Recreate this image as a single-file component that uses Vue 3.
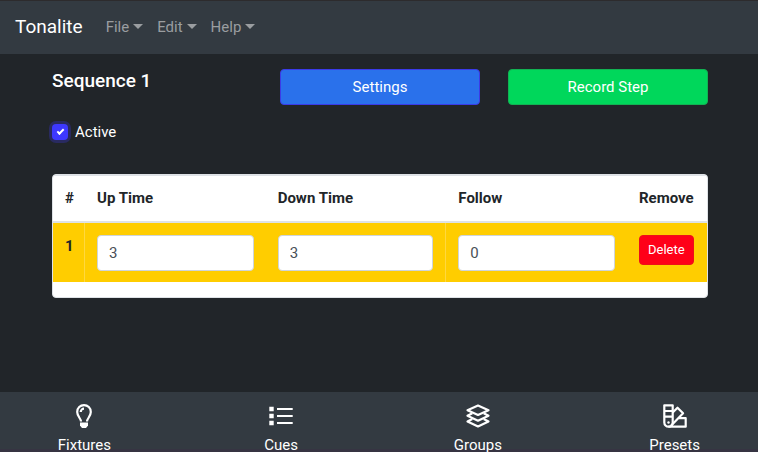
<script setup>
import { ref } from 'vue'

const menus = ['File', 'Edit', 'Help']
const active = ref(true)
const steps = ref([{ id: 1, up: 3, down: 3, follow: 0 }])
const tabs = ['Fixtures', 'Cues', 'Groups', 'Presets']
</script>

<template>
  <div class="app">
    <nav class="navbar">
      <a class="brand" href="#">Tonalite</a>
      <a v-for="menu in menus" :key="menu" class="menu" href="#">
        {{ menu }}<span class="caret"></span>
      </a>
    </nav>

    <main class="content">
      <div class="head">
        <h1>Sequence 1</h1>
        <button class="btn settings" type="button">Settings</button>
        <button class="btn record" type="button">Record Step</button>
      </div>

      <div class="check">
        <input id="active" v-model="active" type="checkbox" />
        <label for="active">Active</label>
      </div>

      <div class="panel">
        <table>
          <colgroup>
            <col class="c-num" />
            <col class="c-time" />
            <col class="c-time" />
            <col class="c-time" />
            <col class="c-remove" />
          </colgroup>
          <thead>
            <tr>
              <th scope="col">#</th>
              <th scope="col">Up Time</th>
              <th scope="col">Down Time</th>
              <th scope="col">Follow</th>
              <th scope="col">Remove</th>
            </tr>
          </thead>
          <tbody>
            <tr v-for="step in steps" :key="step.id">
              <th scope="row">{{ step.id }}</th>
              <td><input v-model="step.up" type="text" aria-label="Up Time" /></td>
              <td><input v-model="step.down" type="text" aria-label="Down Time" /></td>
              <td><input v-model="step.follow" type="text" aria-label="Follow" /></td>
              <td><button class="delete" type="button">Delete</button></td>
            </tr>
          </tbody>
        </table>
      </div>
    </main>

    <nav class="tabs">
      <a v-for="tab in tabs" :key="tab" class="tab" href="#">
        <svg v-if="tab === 'Fixtures'" viewBox="0 0 24 24" aria-hidden="true">
          <path d="M9 17.500C9 14.500 5.200 12.500 5.200 7.900a6.800 6.800 0 0 1 13.600 0c0 4.600-3.800 6.600-3.800 9.600" />
          <path d="M8.700 8a3.300 3.300 0 0 1 3.300-3.300" />
          <path class="solid" d="M8 18.500h8v3L14 24h-4l-2-2.500z" />
        </svg>
        <svg v-else-if="tab === 'Cues'" viewBox="0 0 24 24" aria-hidden="true">
          <path class="solid" d="M.3 2.800h4.400v4.400H.3zM.3 9.800h4.400v4.400H.3zM.3 16.800h4.400v4.400H.3z" />
          <path d="M8 5h15.700M8 12h15.700M8 19h15.700" />
        </svg>
        <svg v-else-if="tab === 'Groups'" viewBox="0 0 24 24" aria-hidden="true">
          <path d="M12 1.500 22.500 6.200 12 11 1.500 6.200z" />
          <path d="M6.300 9.300 1.500 11.800 12 16.700l10.500-4.900-4.800-2.500" />
          <path d="M6.300 15 1.500 17.500 12 22.400l10.500-4.900-4.800-2.500" />
        </svg>
        <svg v-else viewBox="0 0 24 24" aria-hidden="true">
          <path d="M1.300 1.300h8.400v17.200a4.200 4.200 0 0 1-8.400 0zM1.300 7h8.400M1.300 12.700h8.400" />
          <path d="M9.700 8.500 14.500 3.700l5.600 5.600L8.200 21.400M15.500 14.200h7.200v8.500H5.500" />
          <circle class="solid" cx="5.500" cy="18.500" r="1.200" />
        </svg>
        <span>{{ tab }}</span>
      </a>
    </nav>
  </div>
</template>

<style>
body {
  background: #212529;
}
</style>

<style scoped>
.app,
.app * {
  box-sizing: border-box;
}

.app {
  display: flex;
  flex-direction: column;
  height: 100vh;
  overflow: hidden;
  background: #212529;
  color: #fff;
  font-family: Roboto, "Liberation Sans", sans-serif;
  font-size: 15px;
  line-height: 22px;
}

a {
  color: inherit;
  text-decoration: none;
}

button,
input {
  margin: 0;
  font: inherit;
}

.navbar {
  display: flex;
  align-items: center;
  flex: none;
  gap: 14px;
  height: 54px;
  padding: 0 15px 1px;
  background: #333a41;
  border-top: 1px solid #2d2b2d;
}

.brand {
  margin-right: 9px;
  font-size: 19px;
}

.menu {
  display: flex;
  align-items: center;
  gap: 4px;
  color: #9a9da0;
}

.caret {
  margin-bottom: 1px;
  border: 5px solid transparent;
  border-top-color: currentColor;
  border-bottom: 0;
}

.content {
  flex: 1;
  min-height: 0;
  padding: 15px 50px 0 52px;
}

.head {
  display: grid;
  grid-template-columns: repeat(3, 1fr);
  gap: 28px;
}

h1 {
  margin: 0;
  font-size: 19px;
  font-weight: 500;
  line-height: 24px;
}

.btn {
  height: 36px;
  padding: 0 12px;
  border: 1px solid;
  border-radius: 4px;
  color: #fff;
}

.settings {
  background: #2a71eb;
  border-color: #3b3be8;
}

.record {
  background: #00d75b;
  border-color: #12b253;
}

.check {
  display: flex;
  align-items: center;
  gap: 7px;
  margin-top: 16px;
}

.check input {
  display: grid;
  place-items: center;
  width: 16px;
  height: 16px;
  appearance: none;
  background: #3d38ff;
  border-radius: 4px;
  box-shadow: 0 0 0 3px #292a60;
}

.check input:checked::after {
  content: "";
  width: 5px;
  height: 2px;
  margin-bottom: 2px;
  border: solid #fff;
  border-width: 0 0 2px 2px;
  transform: rotate(-45deg);
}

.panel {
  margin-top: 31px;
  padding-bottom: 15px;
  overflow: hidden;
  background: #fff;
  border: 1px solid #dee2e6;
  border-radius: 4px;
  color: #212529;
}

table {
  width: 100%;
  table-layout: fixed;
  border-collapse: separate;
  border-spacing: 0;
}

.c-num {
  width: 32px;
}

.c-remove {
  width: 80px;
}

th,
td {
  padding: 12px 12px 11px;
  text-align: left;
  vertical-align: top;
}

th {
  font-weight: 700;
}

thead th {
  padding: 11px 12px 12px;
  border-top: 1px solid #dee2e6;
  border-bottom: 2px solid #dee2e6;
}

tbody tr {
  background: #ffcd00;
}

th[scope="row"] {
  padding-right: 8px;
  border-right: 1px solid #ffd83f;
}

tbody td:nth-child(3) {
  border-right: 1px solid #ffd83f;
}

td input {
  display: block;
  width: 100%;
  height: 36px;
  padding: 0 11px;
  background: #fff;
  border: 1px solid #ced4da;
  border-radius: 4px;
  color: #495057;
}

.delete {
  display: block;
  height: 30px;
  padding: 0 8px;
  background: #ff0018;
  border: 1px solid #ed1018;
  border-radius: 4px;
  color: #fff;
  font-size: 13px;
}

.tabs {
  display: grid;
  grid-template-columns: repeat(4, 1fr);
  flex: none;
  height: 60px;
  padding: 12px 0 0 1px;
  gap: 30px;
  background: #333a41;
  border-bottom: 3px solid #363442;
  line-height: 14px;
}

.tab {
  display: flex;
  flex-direction: column;
  align-items: center;
  gap: 10px;
}

.tab svg {
  width: 24px;
  height: 24px;
  flex: none;
  fill: none;
  stroke: #fff;
  stroke-width: 2.2;
  stroke-linejoin: round;
}

.tab .solid {
  fill: #fff;
  stroke: none;
}
</style>
